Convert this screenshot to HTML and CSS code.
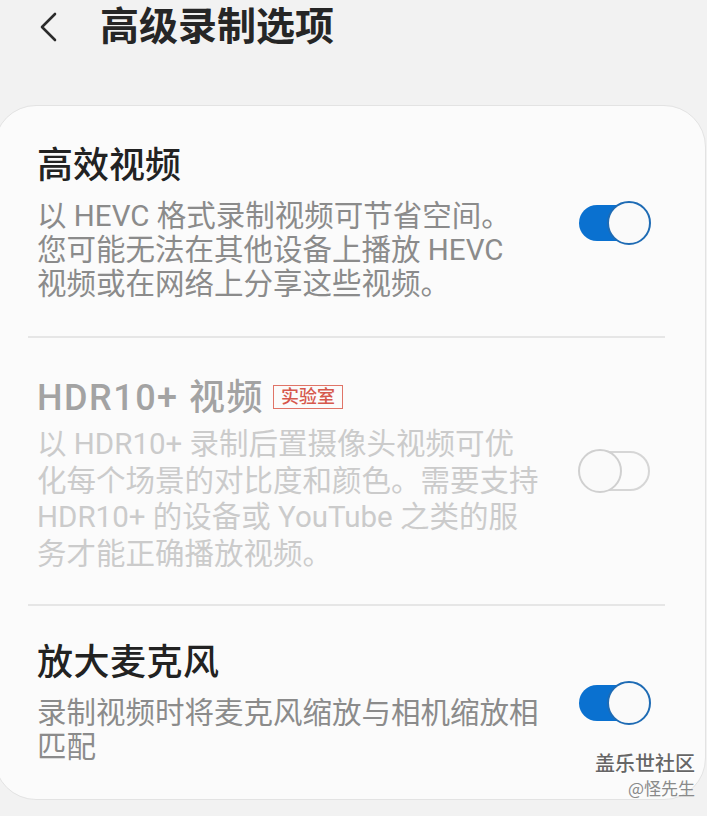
FILE: index.html
```html
<!DOCTYPE html>
<html>
<head>
    <meta charset="utf-8">
    <title>高级录制选项</title>
    <link rel="stylesheet" href="styles.css">
</head>
<body>

<!-- Top bar -->
<div class="top-bar">
    <svg class="back" width="20" height="30" viewBox="0 0 20 30">
        <polyline points="16,2 3,15 16,28" fill="none" stroke="#2b2b2b" stroke-width="2.6" stroke-linecap="round" stroke-linejoin="round"/>
    </svg>
    <h1>高级录制选项</h1>
</div>

<div class="card">
    <div class="item first">
        <div class="text">
            <div class="title">高效视频</div>
            <div class="desc">以 HEVC 格式录制视频可节省空间。<br>您可能无法在其他设备上播放 HEVC<br>视频或在网络上分享这些视频。</div>
        </div>
        <div class="switch on"><span class="track"></span><span class="thumb"></span></div>
    </div>

    <div class="divider"></div>

    <div class="item disabled">
        <div class="text">
            <div class="title">HDR10+ 视频<span class="badge">实验室</span></div>
            <div class="desc">以 HDR10+ 录制后置摄像头视频可优<br>化每个场景的对比度和颜色。需要支持<br>HDR10+ 的设备或 YouTube 之类的服<br>务才能正确播放视频。</div>
        </div>
        <div class="switch off"><span class="track"></span><span class="thumb"></span></div>
    </div>

    <div class="divider"></div>

    <div class="item last">
        <div class="text">
            <div class="title">放大麦克风</div>
            <div class="desc">录制视频时将麦克风缩放与相机缩放相<br>匹配</div>
        </div>
        <div class="switch on"><span class="track"></span><span class="thumb"></span></div>
    </div>

    <!-- Forum watermark -->
    <div class="watermark">
        <div class="wm-name">盖乐世社区</div>
        <div class="wm-user">@怪先生</div>
    </div>
</div>

</body>
</html>
```

FILE: styles.css
```css
/* Page */
body {
    margin: 0;
    background-color: #f2f2f2;
    font-family: Roboto, "Noto Sans CJK SC", sans-serif;
    overflow: hidden;
}

/* Header with back arrow */
.top-bar {
    display: flex;
    align-items: center;
    height: 56px;
    padding-left: 39px;
}

.top-bar .back {
    margin-top: -2px;
}

.top-bar h1 {
    margin: -3px 0 0 41px;
    font-size: 39px;
    font-weight: 700;
    color: #262626;
    line-height: 56px;
}

/* Main card */
.card {
    position: relative;
    margin: 49px 1px 0 -6px;
    height: 695px;
    background-color: #fbfbfb;
    border: 1px solid #e3e3e3;
    border-radius: 42px;
    box-sizing: border-box;
}

.item {
    display: flex;
    align-items: center;
    padding: 38px 54px 32px 42px;
}

.item.first {
    padding-bottom: 35px;
}

.item.last {
    padding-top: 35px;
}

.text {
    flex: 1;
}

.title {
    font-size: 36px;
    font-weight: 500;
    line-height: 44px;
    color: #222;
}

.item.last .title {
    letter-spacing: 0.5px;
}

.desc {
    margin-top: 11px;
    font-size: 29.5px;
    line-height: 34px;
    color: #8b8b8b;
}

.divider {
    height: 2px;
    margin: 0 40px 0 33px;
    background-color: #e6e6e6;
}

/* Disabled row */
.disabled .title {
    color: #a3a3a3;
    letter-spacing: 1.5px;
}

.disabled .desc {
    color: #cbcbcb;
    margin-top: 6px;
    line-height: 36.5px;
}

.badge {
    display: inline-block;
    margin-left: 9px;
    padding: 0 7px;
    font-size: 18px;
    line-height: 22px;
    letter-spacing: 0;
    color: #d6584c;
    border: 1.5px solid #e07467;
    vertical-align: 7px;
}

/* Toggle switches */
.switch {
    position: relative;
    width: 73px;
    height: 44px;
    flex-shrink: 0;
}

.switch .track {
    position: absolute;
    top: 4px;
    height: 36px;
    border-radius: 18px;
}

.switch .thumb {
    position: absolute;
    top: 0;
    width: 44px;
    height: 44px;
    border-radius: 50%;
    box-sizing: border-box;
    background-color: #fafafa;
}

.switch.on .track {
    left: 1px;
    width: 66px;
    background-color: #0a71d0;
}

.switch.on .thumb {
    right: 0;
    border: 2.5px solid #1e6bb4;
}

.switch.off {
    margin-top: -6px;
}

.switch.off .track {
    top: 2px;
    right: 1px;
    width: 66px;
    height: 40px;
    border-radius: 20px;
    border: 2px solid #d6d6d6;
    box-sizing: border-box;
}

.switch.off .thumb {
    left: 0;
    border: 2.5px solid #d0d0d0;
}

/* Watermark in the corner */
.watermark {
    position: absolute;
    right: 10px;
    bottom: 0;
    text-align: right;
    font-family: "Noto Sans CJK SC", sans-serif;
}

.wm-name {
    font-size: 20px;
    line-height: 28px;
    font-weight: 500;
    color: #666;
    text-shadow: 0 0 2px #fff, 1px 1px 0 #fff;
}

.wm-user {
    font-size: 17px;
    line-height: 22px;
    color: #8a8a8a;
}
```
